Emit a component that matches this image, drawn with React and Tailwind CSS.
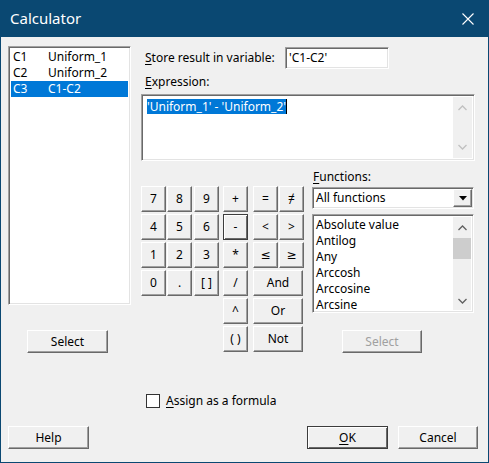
import React from "react";

const FONT = "font-['Noto_Sans','DejaVu_Sans',sans-serif]";

// raised classic button
const Btn = ({ children, className = "", def = false, disabled = false }) => (
  <button
    className={`flex items-center justify-center bg-[#f0f0f0] text-[12px] leading-none ${
      disabled ? "text-[#a0a0a0]" : "text-black"
    } ${
      def
        ? "border border-[#3c3c3c] shadow-[inset_1px_1px_0_#fff,inset_-1px_-1px_0_#696969]"
        : "border border-t-white border-l-white border-b-[#696969] border-r-[#696969] shadow-[inset_-1px_-1px_0_#a0a0a0]"
    } ${className}`}
  >
    {children}
  </button>
);

const Sunken = ({ children, className = "" }) => (
  <div
    className={`border border-t-[#a0a0a0] border-l-[#a0a0a0] border-b-white border-r-white shadow-[inset_1px_1px_0_#696969,inset_-1px_-1px_0_#e3e3e3] bg-white ${className}`}
  >
    {children}
  </div>
);

const Chevron = ({ up = true, color = "#606060" }) => (
  <svg width="9" height="6" viewBox="0 0 9 6">
    <path
      d={up ? "M0.5 5 L4.5 1 L8.5 5" : "M0.5 1 L4.5 5 L8.5 1"}
      fill="none"
      stroke={color}
      strokeWidth="1.3"
    />
  </svg>
);

const columns = [
  ["C1", "Uniform_1"],
  ["C2", "Uniform_2"],
  ["C3", "C1-C2"],
];

const functions = ["Absolute value", "Antilog", "Any", "Arccosh", "Arccosine", "Arcsine"];

const U = ({ children }) => <span className="underline underline-offset-2">{children}</span>;

export default function App() {
  return (
    <div className={`${FONT} w-[489px] h-[463px] flex flex-col bg-[#f0f0f0] text-black select-none`}>
      {/* title bar */}
      <div className="h-[37px] bg-[#0a4872] flex items-center justify-between px-[10px]">
        <span className="text-white text-[15px] leading-none">Calculator</span>
        <svg width="12" height="12" viewBox="0 0 12 12" className="mr-[5px]">
          <path d="M0.5 0.5 L11.5 11.5 M11.5 0.5 L0.5 11.5" stroke="#fff" strokeWidth="1.1" />
        </svg>
      </div>

      <div className="flex-1 flex flex-col border-x border-b border-[#0a4872] text-[12px] leading-[16px]">
        <div className="flex">
          {/* left: variables list */}
          <div className="ml-[7px] w-[123px] flex flex-col">
            <Sunken className="mt-[9px] h-[259px] p-[2px]">
              {columns.map(([c, n], i) => (
                <div
                  key={c}
                  className={`h-[16px] flex pl-[2px] ${i === 2 ? "bg-[#0078d7] text-white" : ""}`}
                >
                  <span className="w-[35px]">{c}</span>
                  <span>{n}</span>
                </div>
              ))}
            </Sunken>
            <Btn className="mt-[25px] ml-[19px] w-[81px] h-[23px]">Select</Btn>
          </div>

          {/* right */}
          <div className="ml-[10px] w-[334px] flex flex-col">
            <div className="mt-[10px] flex items-center">
              <span className="ml-[4px] w-[140px]">
                <U>S</U>tore result in variable:
              </span>
              <Sunken className="w-[104px] h-[22px] px-[3px] flex items-center">'C1-C2'</Sunken>
            </div>
            <div className="mt-[5px] ml-[4px]">
              <U>E</U>xpression:
            </div>
            <Sunken className="mt-[4px] h-[67px] flex p-[2px]">
              <div className="flex-1 pl-[3px] pt-[2px] flex items-start">
                <span className="bg-[#0078d7] text-white h-[15px] leading-[15px]">'Uniform_1' - 'Uniform_2'</span>
                <span className="w-px h-[15px] bg-black" />
              </div>
              <div className="w-[19px] bg-[#f0f0f0] flex flex-col items-center justify-between py-[8px]">
                <Chevron up color="#c0c0c0" />
                <Chevron up={false} color="#c0c0c0" />
              </div>
            </Sunken>

            <div className="flex">
              {/* keypad */}
              <div className="mt-[25px] grid grid-cols-[26px_27px_29px_30px_26px_24px] grid-rows-[repeat(6,26px)] gap-y-[2px] w-[162px]">
                {["7", "8", "9", "+", "=", "≠", "4", "5", "6", "-", "<", ">", "1", "2", "3", "*", "≤", "≥"].map((k) => (
                  <Btn key={k} def={k === "-"} className="w-[25px] h-[26px]">
                    {k}
                  </Btn>
                ))}
                <Btn className="w-[25px] h-[26px]">0</Btn>
                <Btn className="w-[25px] h-[26px]">.</Btn>
                <Btn className="w-[25px] h-[26px]">[ ]</Btn>
                <Btn className="w-[25px] h-[26px]">/</Btn>
                <Btn className="col-span-2 w-[50px] h-[26px]">And</Btn>
                <Btn className="col-start-4 w-[25px] h-[26px]">^</Btn>
                <Btn className="col-span-2 w-[50px] h-[26px]">Or</Btn>
                <Btn className="col-start-4 w-[25px] h-[26px]">( )</Btn>
                <Btn className="col-span-2 w-[50px] h-[26px]">Not</Btn>
              </div>

              {/* functions */}
              <div className="ml-[9px] w-[162px] flex flex-col">
                <div className="mt-[8px] ml-[1px] h-[16px]">
                  <U>F</U>unctions:
                </div>
                <Sunken className="mt-[2px] h-[22px] flex items-center p-[1px]">
                  <span className="flex-1 pl-[2px]">All functions</span>
                  <Btn className="w-[19px] h-[18px]">
                    <svg width="8" height="5" viewBox="0 0 8 5">
                      <path d="M0 0 H8 L4 4.5 Z" fill="#000" />
                    </svg>
                  </Btn>
                </Sunken>
                <Sunken className="mt-[5px] h-[99px] flex p-[2px] overflow-hidden">
                  <div className="flex-1 pl-[1px] overflow-hidden">
                    {functions.map((f) => (
                      <div key={f} className="h-[16px] whitespace-nowrap">
                        {f}
                      </div>
                    ))}
                  </div>
                  <div className="w-[18px] bg-[#f0f0f0] flex flex-col items-center">
                    <div className="h-[21px] flex items-center">
                      <Chevron up />
                    </div>
                    <div className="w-full h-[21px] bg-[#cdcdcd]" />
                    <div className="flex-1 flex items-end pb-[6px]">
                      <Chevron up={false} />
                    </div>
                  </div>
                </Sunken>
                <Btn disabled className="mt-[17px] ml-[30px] w-[80px] h-[23px]">
                  Select
                </Btn>
              </div>
            </div>
          </div>
        </div>

        {/* checkbox */}
        <div className="mt-[40px] ml-[145px] h-[16px] flex items-center">
          <span className="w-[14px] h-[14px] border border-[#333] bg-white" />
          <span className="ml-[6px]">
            <U>A</U>ssign as a formula
          </span>
        </div>

        {/* bottom buttons */}
        <div className="mt-[17px] flex">
          <Btn className="ml-[7px] w-[81px] h-[23px]">Help</Btn>
          <div className="flex-1" />
          <Btn def className="w-[81px] h-[23px]">
            <U>O</U>K
          </Btn>
          <Btn className="ml-[10px] mr-[10px] w-[80px] h-[23px]">Cancel</Btn>
        </div>
      </div>
    </div>
  );
}
